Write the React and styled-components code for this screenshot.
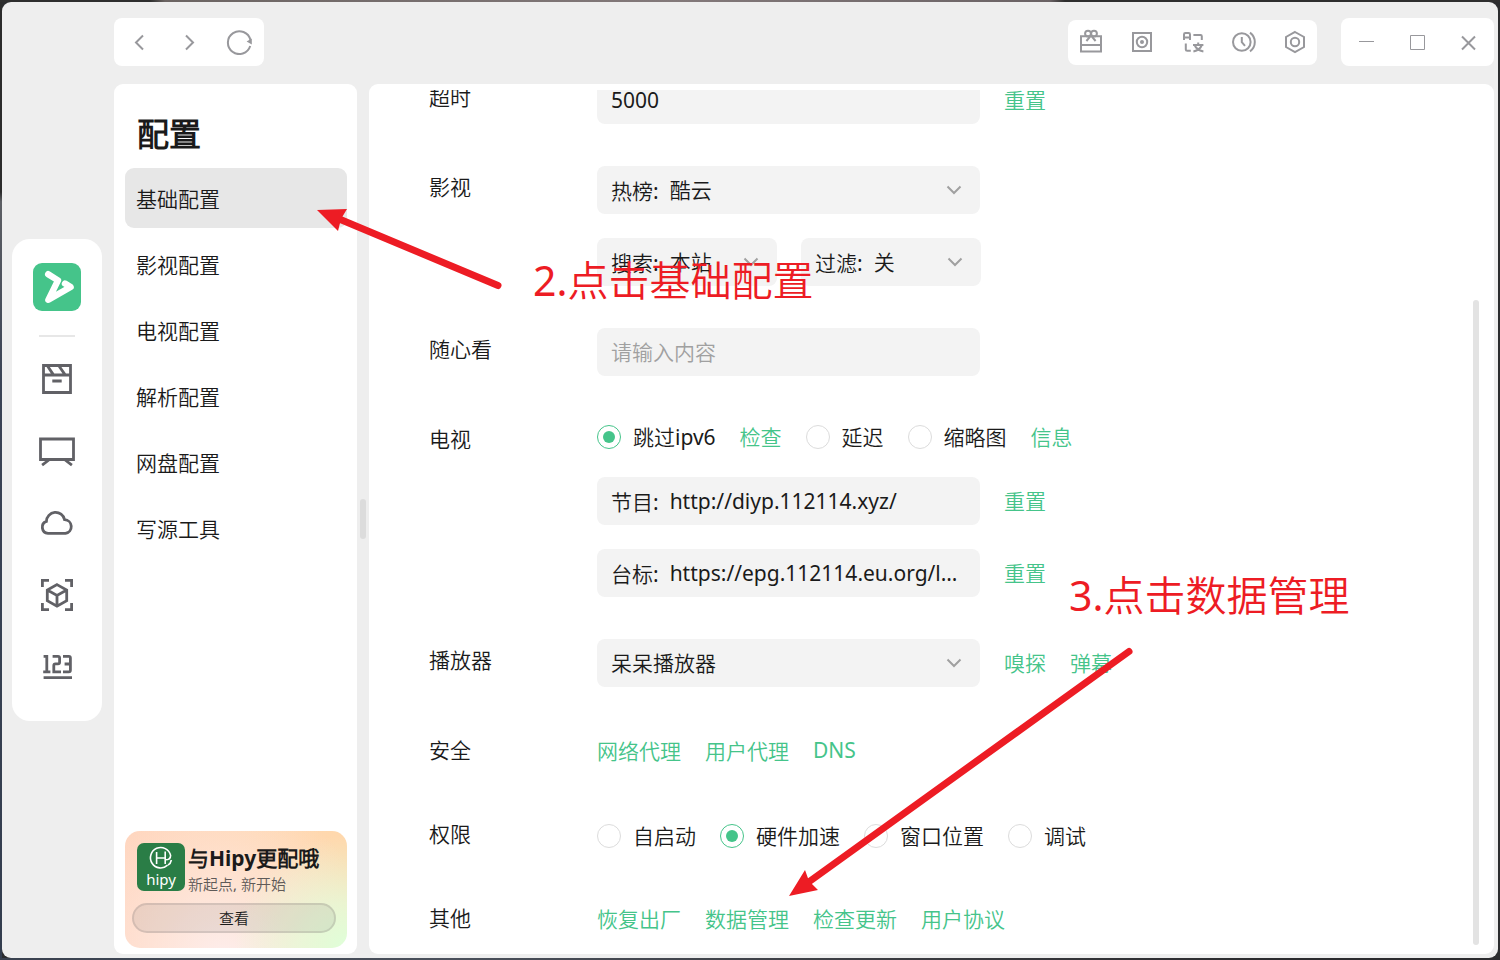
import React from "react";
import styled, { createGlobalStyle, css } from "styled-components";

const GREEN = "#45c48a";
const RED = "#ed1c24";

const GlobalStyle = createGlobalStyle`
  *, *::before, *::after { box-sizing: border-box; }
  html, body { margin: 0; height: 100%; }
  #root { height: 100%; }
  body, button, input, select {
    font-family: "Noto Sans", "Noto Sans CJK SC DemiLight", "Noto Sans CJK SC", sans-serif;
    font-size: 21px;
    font-weight: 400;
    color: #1a1a1a;
  }
  button { border: 0; padding: 0; background: none; cursor: pointer; }
`;

const Desktop = styled.div`
  position: relative;
  height: 100vh;
  padding: 2px;
  overflow: hidden;
  background:
    linear-gradient(90deg, #2e2e2e 10%, #6b6462 11%, #83797a 45%, #6a6264 70%, #2e2e2e 71%) top / 100% 2px no-repeat,
    linear-gradient(90deg, #39414f, #4a505b 30%, #3a3b40 60%, #2b2b2e 85%) bottom / 100% 2px no-repeat,
    linear-gradient(180deg, #2b2b2b 20%, #5d5f64 21%, #3a4355 40%, #333d4e) left / 2px 100% no-repeat,
    #2b2c2e;
`;

const AppWindow = styled.div`
  display: flex;
  height: 100%;
  border-radius: 9px;
  background: #eeeeee;
`;

/* ---------- left rail ---------- */

const Rail = styled.nav`
  flex: none;
  display: flex;
  align-items: center;
  padding: 0 12px 0 10px;
`;

const RailCard = styled.div`
  display: flex;
  flex-direction: column;
  align-items: center;
  width: 90px;
  padding: 24px 0 30px;
  border-radius: 18px;
  background: #fff;
`;

const RailDivider = styled.hr`
  width: 36px;
  height: 2px;
  margin: 24px 0 18px;
  border: 0;
  background: #e7e7e7;
`;

const RailList = styled.div`
  display: flex;
  flex-direction: column;
  gap: 24px;
`;

const RailButton = styled.button`
  display: grid;
  place-items: center;
  width: 48px;
  height: 48px;
  color: #616166;
`;

/* ---------- header ---------- */

const Main = styled.div`
  flex: 1;
  min-width: 0;
  display: flex;
  flex-direction: column;
  padding: 16px 4px 4px 0;
`;

const Header = styled.header`
  display: flex;
  align-items: center;
  gap: 24px;
  margin-bottom: 18px;
`;

const BarCard = styled.div`
  display: flex;
  height: 48px;
  border-radius: 8px;
  background: #fff;
`;

const ToolCard = styled(BarCard)`
  height: 45px;
  gap: 27px;
  padding: 0 10px 0 11px;
  margin-left: auto;
`;

const BarButton = styled.button`
  display: grid;
  place-items: center;
  width: ${(p) => p.$width}px;
  color: #98989c;
`;

/* ---------- sidebar ---------- */

const Body = styled.div`
  flex: 1;
  min-height: 0;
  display: flex;
`;

const Sidebar = styled.aside`
  flex: none;
  display: flex;
  flex-direction: column;
  width: 243px;
  padding: 28px 10px 6px 11px;
  border-radius: 9px;
  background: #fff;
`;

const SideTitle = styled.h1`
  margin: 0 0 12px;
  padding-left: 12px;
  font-size: 32px;
  line-height: 44px;
  font-weight: 700;
`;

const SideList = styled.div`
  display: flex;
  flex-direction: column;
  gap: 6px;
`;

const SideItem = styled.button`
  height: 60px;
  padding: 0 11px;
  border-radius: 9px;
  text-align: left;
  background: ${(p) => (p.$active ? "#e7e7e7" : "transparent")};
`;

const Promo = styled.section`
  display: flex;
  flex-direction: column;
  margin-top: auto;
  padding: 12px 11px 15px 7px;
  border-radius: 15px;
  background:
    radial-gradient(circle at 100% 100%, #dfffd9 0%, rgba(226, 255, 220, 0.7) 18%, rgba(240, 240, 220, 0) 45%),
    radial-gradient(ellipse at 45% 115%, #fdeeee 0%, rgba(253, 236, 232, 0) 90%),
    linear-gradient(90deg, #ffd6bf, #ffd8ac);
`;

const PromoHead = styled.div`
  display: flex;
  gap: 3px;
  padding-left: 5px;
`;

const PromoText = styled.div`
  white-space: nowrap;
`;

const PromoTitle = styled.h2`
  margin: 0;
  font-size: 21px;
  line-height: 30px;
  font-weight: 700;
`;

const PromoNote = styled.p`
  margin: 0;
  font-size: 15px;
  line-height: 22px;
  color: #5f5a58;
`;

const PromoButton = styled.button`
  height: 30px;
  margin-top: 8px;
  padding-bottom: 2px;
  border: 2px solid rgba(120, 110, 110, 0.2);
  border-radius: 15px;
  background: rgba(120, 120, 120, 0.14);
  font-size: 15px;
`;

const Splitter = styled.div`
  flex: none;
  display: flex;
  align-items: center;
  justify-content: center;
  width: 12px;

  &::before {
    content: "";
    width: 6px;
    height: 40px;
    border-radius: 3px;
    background: #dcdcdc;
  }
`;

/* ---------- settings panel ---------- */

const Panel = styled.main`
  flex: 1;
  min-width: 0;
  display: flex;
  padding: 6px 15px 9px 60px;
  border-radius: 9px;
  background: #fff;
`;

const Scroller = styled.form`
  flex: 1;
  min-width: 0;
  display: flex;
  flex-direction: column;
  justify-content: flex-end;
  gap: 42px;
  padding-bottom: 6px;
  overflow: hidden;
`;

const ScrollTrack = styled.div`
  flex: none;
  display: flex;
  align-items: flex-end;

  &::before {
    content: "";
    width: 6px;
    height: calc(75% + 4px);
    border-radius: 3px;
    background: #e3e3e3;
  }
`;

const FormRow = styled.div`
  flex: none;
  display: flex;
  align-items: flex-start;
`;

const RowLabel = styled.span`
  flex: none;
  width: 168px;
  height: 42px;
  line-height: 43px;
`;

const Stack = styled.div`
  display: flex;
  flex-direction: column;
  gap: 24px;
`;

const Line = styled.div`
  display: flex;
  align-items: center;
  gap: 24px;
  white-space: nowrap;
  ${(p) =>
    p.$kind === "links" &&
    css`
      height: 42px;
      padding-top: 2px;
    `}
  ${(p) =>
    p.$kind === "radios" &&
    css`
      height: ${p.$tall ? 42 : 35}px;
      padding-top: 3px;
    `}
`;

const Field = styled.label`
  display: flex;
  align-items: center;
  gap: 11px;
  width: ${(p) => (p.$half ? 180 : 383)}px;
  height: 48px;
  padding: 0 16px 0 14px;
  border-radius: 8px;
  background: #f3f3f3;
`;

const controlStyle = css`
  flex: 1;
  min-width: 0;
  width: 0;
  height: 44px;
  padding: 0;
  border: 0;
  outline: 0;
  background: transparent;
`;

const TextInput = styled.input`
  ${controlStyle}
  text-overflow: ellipsis;
  &::placeholder { color: #a0a0a0; }
`;

const Select = styled.select`
  ${controlStyle}
  appearance: none;
`;

const Action = styled.a`
  padding-bottom: 2px;
  color: ${GREEN};
  text-decoration: none;
`;

const RadioLabel = styled.label`
  display: flex;
  align-items: center;
  gap: 12px;
`;

const RadioText = styled.span`
  padding-bottom: 2px;
`;

const RadioDot = styled.input`
  appearance: none;
  display: grid;
  place-items: center;
  width: 24px;
  height: 24px;
  margin: 0;
  border: 1px solid #dcdcdc;
  border-radius: 50%;
  background: #fff;

  &:checked { border-color: ${GREEN}; }
  &:checked::before {
    content: "";
    width: 12px;
    height: 12px;
    border-radius: 50%;
    background: ${GREEN};
  }
`;

/* ---------- annotations drawn over the window ---------- */

const Arrows = styled.svg`
  position: absolute;
  left: 0;
  top: 0;
  pointer-events: none;
`;

const Note = styled.p`
  position: absolute;
  left: ${(p) => p.$x}px;
  top: ${(p) => p.$y}px;
  margin: 0;
  font-size: 41px;
  line-height: 56px;
  white-space: nowrap;
  color: ${RED};
  pointer-events: none;
`;

/* ---------- icons ---------- */

const Icon = ({ size = 24, stroke = 2, children, ...rest }) => (
  <svg width={size} height={size} viewBox={`0 0 ${size} ${size}`} fill="none" stroke="currentColor" strokeWidth={stroke} aria-hidden="true" {...rest}>
    {children}
  </svg>
);

const LogoIcon = () => (
  <svg width="48" height="48" viewBox="0 0 48 48" aria-hidden="true">
    <rect width="48" height="48" rx="9" fill="#45c48a" />
    <path
      d="M15.2 11.2 25 17.4 15.4 36.8 37.6 24 32 20.6"
      fill="none" stroke="#fff" strokeWidth="6.4" strokeLinecap="round" strokeLinejoin="round"
    />
  </svg>
);

const HipyLogo = () => (
  <svg width="48" height="48" viewBox="0 0 48 48" role="img" aria-label="hipy">
    <rect width="48" height="48" rx="7" fill="#2a7d46" />
    <g fill="none" stroke="#fff" strokeWidth="1.6">
      <path d="M30.6 22.2A10.2 10.2 0 1 1 33.6 12.4c0 3-2.4 4.4-5.4 4.4" />
      <path d="M19.6 9v12M28.2 8.4v12.6M19.6 15h8.6" />
      <path d="M31 22c2-1 3-3 3.4-5" />
    </g>
    <text x="24" y="42" textAnchor="middle" fill="#fff" fontSize="15">hipy</text>
  </svg>
);

const railIcons = [
  ["影视", <>
    <path d="M4.5 4.5h27v27h-27zM4.5 14h27M8.5 5l5.8 8.6M20 5l6 8.6M13.3 20h9.4" />
  </>],
  ["电视", <>
    <path d="M1.5 6h33v20.5h-33zM10.5 26.5l-7.4 5.6M25.5 26.5l7.4 5.6" />
  </>],
  ["网盘", <>
    <path d="M9 28.4H26.5A6.9 6.9 0 0 0 25.6 14.7 9.2 9.2 0 0 0 7.4 16.4 6.2 6.2 0 0 0 9 28.4z" />
  </>],
  ["解析", <>
    <path d="M3.4 10V3.4H10M26 3.4h6.6V10M32.6 26v6.6H26M10 32.6H3.4V26" />
    <path d="M18 7.6l9.7 5.4v10.8L18 29.2l-9.7-5.4V13zM8.3 13l9.7 5.4 9.7-5.4M18 18.4v10.8" />
  </>],
  ["工具", <>
    <path d="M4.6 7.4H7.8V22.8M4.2 22.8h7.2M13.6 7.4h5.4q1.6 0 1.6 1.6v4.2q0 1.6-1.6 1.6h-2.6q-1.6 0-1.6 1.6v6.4H22M24 7.4h5.8q1.6 0 1.6 1.6v12.2q0 1.6-1.6 1.6h-5.8M25.6 15h6M4.6 28.6h28.4" />
  </>],
];

const toolIcons = [
  ["礼物", <>
    <path d="M2 6.2h20v15.2H2zM2 15h20M12 5.6 7.4 11M12 5.6l4.6 5.4" />
    <circle cx="9" cy="3.6" r="2.9" /><circle cx="15" cy="3.6" r="2.9" />
  </>],
  ["录制", <>
    <path d="M3 3h18v18H3z" /><circle cx="12" cy="12" r="5.2" />
    <circle cx="12" cy="12" r="2" fill="currentColor" stroke="none" />
  </>],
  ["翻译", <>
    <path d="M3 10V4.4q0-1.4 1.4-1.4h3.2q1.4 0 1.4 1.4v5.6M3 7.4h6M12.4 5h7.2q1.2 0 1.2 1.2V10M4.8 13.4v6q0 1.4 1.4 1.4h3.6M12 15H22.4M17.2 12.4v2.6M20.6 15.4q-1.4 4.6-8.2 6M13.8 15.4q1.6 4.6 8.6 6" />
  </>],
  ["历史", <>
    <circle cx="9.8" cy="12" r="8.8" />
    <path d="M9.8 7v5.2l3.2 3.6M18 2.6q4.8 3.6 4.8 9.4T18 21.4" />
  </>],
  ["设置", <>
    <path d="M12 2l9 5v10l-9 5-9-5V7z" /><circle cx="12" cy="12" r="4.2" />
  </>],
];

const Chevron = () => (
  <Icon size={20} stroke={2} color="#a0a0a0">
    <path d="M3.5 6.5 10 13l6.5-6.5" />
  </Icon>
);

/* ---------- form parts ---------- */

const SelectField = ({ prefix, value, half, label }) => (
  <Field $half={half}>
    {prefix && <span>{prefix}</span>}
    <Select aria-label={label} defaultValue={value}>
      <option>{value}</option>
    </Select>
    <Chevron />
  </Field>
);

const InputField = ({ prefix, value, label, placeholder }) => (
  <Field>
    {prefix && <span>{prefix}</span>}
    <TextInput type="text" aria-label={label} defaultValue={value} placeholder={placeholder} />
  </Field>
);

const Radio = ({ name, checked, children }) => (
  <RadioLabel>
    <RadioDot type="radio" name={name} defaultChecked={checked} />
    <RadioText>{children}</RadioText>
  </RadioLabel>
);

const Links = ({ items }) => items.map((t) => <Action key={t} href="#">{t}</Action>);

const Row = ({ label, children }) => (
  <FormRow>
    <RowLabel>{label}</RowLabel>
    <Stack>{children}</Stack>
  </FormRow>
);

const sideItems = ["基础配置", "影视配置", "电视配置", "解析配置", "网盘配置", "写源工具"];

export default function App() {
  return (
    <>
      <GlobalStyle />
      <Desktop>
        <AppWindow>
          <Rail>
            <RailCard>
              <LogoIcon />
              <RailDivider />
              <RailList>
                {railIcons.map(([name, art]) => (
                  <RailButton key={name} aria-label={name}>
                    <Icon size={36} stroke={2.8}>{art}</Icon>
                  </RailButton>
                ))}
              </RailList>
            </RailCard>
          </Rail>

          <Main>
            <Header>
              <BarCard>
                <BarButton $width={50} aria-label="后退"><Icon><path d="M16 5.5 9 12.5l7 7" /></Icon></BarButton>
                <BarButton $width={50} aria-label="前进"><Icon><path d="M9 5.5l7 7-7 7" /></Icon></BarButton>
                <BarButton $width={50} aria-label="刷新">
                  <Icon size={26}>
                    <path d="M24.2 17A11.4 11.4 0 1 1 24.4 11" />
                    <path d="M25.8 9.6v6l-5.2-3.2z" fill="currentColor" stroke="none" />
                  </Icon>
                </BarButton>
              </BarCard>
              <ToolCard>
                {toolIcons.map(([name, art]) => (
                  <BarButton key={name} $width={24} aria-label={name}>
                    <Icon overflow="visible">{art}</Icon>
                  </BarButton>
                ))}
              </ToolCard>
              <BarCard>
                <BarButton $width={51} aria-label="最小化"><Icon size={25} stroke={1}><path d="M5 11.5h15" /></Icon></BarButton>
                <BarButton $width={51} aria-label="最大化"><Icon size={25} stroke={1}><path d="M5.5 5.5h14v14h-14z" /></Icon></BarButton>
                <BarButton $width={51} aria-label="关闭"><Icon size={25} stroke={2}><path d="M6 6.5l13 13M19 6.5l-13 13" /></Icon></BarButton>
              </BarCard>
            </Header>

            <Body>
              <Sidebar>
                <SideTitle>配置</SideTitle>
                <SideList>
                  {sideItems.map((t, i) => <SideItem key={t} $active={i === 0}>{t}</SideItem>)}
                </SideList>
                <Promo>
                  <PromoHead>
                    <HipyLogo />
                    <PromoText>
                      <PromoTitle>与Hipy更配哦</PromoTitle>
                      <PromoNote>新起点, 新开始</PromoNote>
                    </PromoText>
                  </PromoHead>
                  <PromoButton>查看</PromoButton>
                </Promo>
              </Sidebar>

              <Splitter />

              <Panel>
                <Scroller>
                  <Row label="超时">
                    <Line>
                      <InputField label="超时" value="5000" />
                      <Links items={["重置"]} />
                    </Line>
                  </Row>
                  <Row label="影视">
                    <SelectField label="热榜" prefix="热榜:" value="酷云" />
                    <Line>
                      <SelectField half label="搜索" prefix="搜索:" value="本站" />
                      <SelectField half label="过滤" prefix="过滤:" value="关" />
                    </Line>
                  </Row>
                  <Row label="随心看">
                    <InputField label="随心看" placeholder="请输入内容" />
                  </Row>
                  <Row label="电视">
                    <Line $kind="radios">
                      <Radio name="ipv6" checked>跳过ipv6</Radio>
                      <Links items={["检查"]} />
                      <Radio name="delay">延迟</Radio>
                      <Radio name="thumbnail">缩略图</Radio>
                      <Links items={["信息"]} />
                    </Line>
                    <Line>
                      <InputField label="节目" prefix="节目:" value="http://diyp.112114.xyz/" />
                      <Links items={["重置"]} />
                    </Line>
                    <Line>
                      <InputField label="台标" prefix="台标:" value="https://epg.112114.eu.org/logo/" />
                      <Links items={["重置"]} />
                    </Line>
                  </Row>
                  <Row label="播放器">
                    <Line>
                      <SelectField label="播放器" value="呆呆播放器" />
                      <Links items={["嗅探", "弹幕"]} />
                    </Line>
                  </Row>
                  <Row label="安全">
                    <Line $kind="links"><Links items={["网络代理", "用户代理", "DNS"]} /></Line>
                  </Row>
                  <Row label="权限">
                    <Line $kind="radios" $tall>
                      <Radio name="autostart">自启动</Radio>
                      <Radio name="hardware" checked>硬件加速</Radio>
                      <Radio name="position">窗口位置</Radio>
                      <Radio name="debug">调试</Radio>
                    </Line>
                  </Row>
                  <Row label="其他">
                    <Line $kind="links"><Links items={["恢复出厂", "数据管理", "检查更新", "用户协议"]} /></Line>
                  </Row>
                </Scroller>
                <ScrollTrack />
              </Panel>
            </Body>
          </Main>
        </AppWindow>

        <Arrows width="1500" height="960" viewBox="0 0 1500 960" fill={RED} stroke={RED} aria-hidden="true">
          <path d="M338 218.5 498 285.5" strokeWidth="7" strokeLinecap="round" />
          <path d="M317 210 347 209 341 219 338 231z" stroke="none" />
          <path d="M808 882.5 1129 651.5" strokeWidth="7" strokeLinecap="round" />
          <path d="M789 896 805 870 809 881 818 890z" stroke="none" />
        </Arrows>
        <Note $x={533} $y={252}>2.点击基础配置</Note>
        <Note $x={1069} $y={567}>3.点击数据管理</Note>
      </Desktop>
    </>
  );
}
